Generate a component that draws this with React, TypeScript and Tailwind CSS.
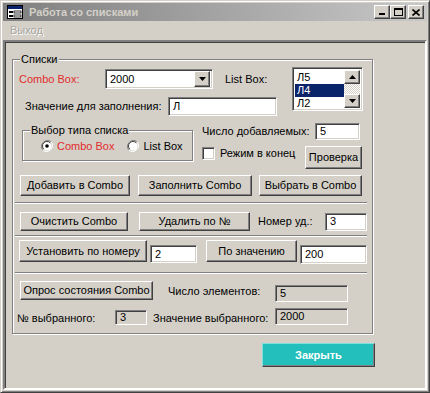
import React from "react";

const raised =
  "bg-[#d4d0c8] border border-t-white border-l-white border-r-[#404040] border-b-[#404040] shadow-[inset_-1px_-1px_0_#808080]";
const sunken =
  "border border-t-[#808080] border-l-[#808080] border-r-white border-b-white shadow-[inset_1px_1px_0_#404040,inset_-1px_-1px_0_#d4d0c8]";

function Btn({ label, className = "" }: { label: string; className?: string }) {
  return (
    <div className={`${raised} flex items-center justify-center shrink-0 whitespace-nowrap ${className}`}>
      {label}
    </div>
  );
}

function Field({ value, className = "", readOnly = false }: { value: string; className?: string; readOnly?: boolean }) {
  return (
    <div
      className={`${sunken} ${readOnly ? "bg-[#d4d0c8]" : "bg-white"} flex items-center pl-[4px] shrink-0 leading-none ${className}`}
    >
      {value}
    </div>
  );
}

function Sep() {
  return <div className="h-0 border-t border-t-[#808080] border-b border-b-white ml-[-4px] w-[352px]" />;
}

function Radio({ checked }: { checked?: boolean }) {
  return (
    <svg width="12" height="12" viewBox="0 0 12 12" className="shrink-0">
      <path d="M10.2 1.8 A6 6 0 0 0 1.8 10.2" fill="none" stroke="#808080" strokeWidth="1" />
      <path d="M1.8 10.2 A6 6 0 0 0 10.2 1.8" fill="none" stroke="#ffffff" strokeWidth="1" />
      <circle cx="6" cy="6" r="4.5" fill="#fff" />
      <path d="M9.2 2.8 A4.5 4.5 0 0 0 2.8 9.2" fill="none" stroke="#404040" strokeWidth="1" />
      {checked && <circle cx="6" cy="6" r="1.8" fill="#000" />}
    </svg>
  );
}

function Arrow({ up }: { up?: boolean }) {
  return (
    <svg width="7" height="4" viewBox="0 0 7 4">
      <polygon points={up ? "3.5,0 7,4 0,4" : "0,0 7,0 3.5,4"} fill="#000" />
    </svg>
  );
}

function TitleIcon() {
  return (
    <svg width="16" height="14" viewBox="0 0 16 14">
      <rect x="0.5" y="0.5" width="15" height="13" fill="#fff" stroke="#000" />
      <rect x="1" y="1" width="14" height="3" fill="#0a246a" />
      <rect x="2" y="6" width="4" height="2" fill="#000" />
      <rect x="7" y="6" width="7" height="2" fill="none" stroke="#000" strokeWidth="0.8" />
      <rect x="2" y="10" width="4" height="2" fill="#000" />
      <rect x="7" y="10" width="7" height="2" fill="none" stroke="#000" strokeWidth="0.8" />
    </svg>
  );
}

export default function App() {
  return (
    <div className="w-[430px] h-[393px] bg-[#d4d0c8] text-[11px] text-black overflow-hidden whitespace-nowrap font-['Liberation_Sans',Arial,sans-serif]">
      <div className="h-full flex flex-col border border-t-[#d4d0c8] border-l-[#d4d0c8] border-r-[#404040] border-b-[#404040] shadow-[inset_1px_1px_0_#fff,inset_-1px_-1px_0_#808080] p-[2px]">
        {/* Title bar */}
        <div className="h-[18px] shrink-0 flex items-center bg-gradient-to-r from-[#808080] to-[#c8c8c8] pl-[4px] pr-[3px]">
          <TitleIcon />
          <span className="ml-[6px] text-[#d4d0c8] font-bold text-[11px]">Работа со списками</span>
          <div className="ml-auto flex items-center">
            <div className={`${raised} w-[16px] h-[14px] flex items-end justify-center pb-[3px]`}>
              <div className="w-[6px] h-[2px] bg-black" />
            </div>
            <div className={`${raised} w-[16px] h-[14px] flex items-center justify-center`}>
              <div className="w-[9px] h-[8px] border border-black border-t-2" />
            </div>
            <div className={`${raised} w-[16px] h-[14px] ml-[2px] flex items-center justify-center`}>
              <svg width="8" height="7" viewBox="0 0 8 7">
                <path d="M0.5 0.5 L7.5 6.5 M7.5 0.5 L0.5 6.5" stroke="#000" strokeWidth="1.6" />
              </svg>
            </div>
          </div>
        </div>

        {/* Menu */}
        <div className="h-[18px] shrink-0 flex items-center pl-[7px]">
          <span className="text-[#a8a6a0] [text-shadow:1px_1px_0_#fff]">Выход</span>
        </div>

        {/* Client area */}
        <div className="flex-1 mt-[1px] border-2 border-t-[#808080] border-l-[#808080] border-r-white border-b-white shadow-[inset_1px_1px_0_#404040]">
          {/* Groupbox Списки */}
          <div className="relative ml-[7px] mt-[17px] w-[361px] h-[275px] border border-[#808080] shadow-[inset_1px_1px_0_#fff,1px_1px_0_#fff] pl-[6px] pt-[7px]">
            <span className="absolute -top-[8px] left-[7px] px-[1px] bg-[#d4d0c8] leading-[14px]">Списки</span>

            {/* Top area */}
            <div className="flex items-start">
              <div className="w-[273px] shrink-0">
                <div className="mt-[2px] h-[20px] flex items-center">
                  <span className="w-[86px] shrink-0 text-[#e22b2b]">Combo Box:</span>
                  <div className={`${sunken} bg-white w-[108px] h-[20px] flex items-center justify-between pl-[4px] pr-[2px]`}>
                    <span>2000</span>
                    <div className={`${raised} w-[16px] h-[16px] flex items-center justify-center`}>
                      <Arrow />
                    </div>
                  </div>
                  <span className="ml-[12px]">List Box:</span>
                </div>
                <div className="mt-[8px] h-[19px] flex items-center">
                  <span className="ml-[6px] w-[143px] shrink-0">Значение для заполнения:</span>
                  <Field value="Л" className="w-[109px] h-[19px]" />
                </div>
              </div>
              <div className={`${sunken} bg-white w-[71px] h-[44px] flex p-[2px]`}>
                <div className="flex-1 flex flex-col leading-[13px] pt-[1px]">
                  <span className="pl-[2px] h-[13px]">Л5</span>
                  <span className="pl-[2px] h-[13px] bg-[#0a246a] text-white">Л4</span>
                  <span className="pl-[2px] h-[13px]">Л2</span>
                </div>
                <div className="w-[16px] flex flex-col bg-[#ecebe7]">
                  <div className={`${raised} h-[14px] flex items-center justify-center`}>
                    <Arrow up />
                  </div>
                  <div className="flex-1 bg-[repeating-conic-gradient(#fff_0_25%,#d4d0c8_0_50%)] bg-[length:2px_2px]" />
                  <div className={`${raised} h-[14px] flex items-center justify-center`}>
                    <Arrow />
                  </div>
                </div>
              </div>
            </div>

            {/* Middle area */}
            <div className="mt-[7px] flex items-start">
              <div className="relative ml-[3px] mt-[7px] w-[171px] h-[31px] border border-[#808080] shadow-[inset_1px_1px_0_#fff,1px_1px_0_#fff] flex items-center pt-[1px]">
                <span className="absolute -top-[8px] left-[7px] px-[1px] bg-[#d4d0c8] leading-[14px]">Выбор типа списка</span>
                <div className="ml-[18px] flex items-center">
                  <Radio checked />
                  <span className="ml-[4px] text-[#e22b2b]">Combo Box</span>
                </div>
                <div className="ml-[13px] flex items-center">
                  <Radio />
                  <span className="ml-[4px]">List Box</span>
                </div>
              </div>
              <div className="ml-[9px] flex flex-col">
                <div className="h-[17px] flex items-center">
                  <span className="w-[113px] shrink-0">Число добавляемых:</span>
                  <Field value="5" className="w-[45px] h-[17px]" />
                </div>
                <div className="mt-[6px] flex items-start">
                  <div className={`${sunken} bg-white w-[13px] h-[13px] mt-[1px] shrink-0`} />
                  <span className="ml-[5px] w-[85px] shrink-0 leading-[14px]">Режим в конец</span>
                  <Btn label="Проверка" className="w-[57px] h-[23px]" />
                </div>
              </div>
            </div>

            {/* Buttons row */}
            <div className="mt-[6px] flex">
              <Btn label="Добавить в Combo" className="ml-[1px] w-[110px] h-[21px]" />
              <Btn label="Заполнить Combo" className="ml-[8px] w-[114px] h-[21px]" />
              <Btn label="Выбрать в Combo" className="ml-[7px] w-[103px] h-[21px]" />
            </div>

            <div className="mt-[6px]">
              <Sep />
            </div>

            <div className="mt-[8px] flex items-center">
              <Btn label="Очистить Combo" className="ml-[1px] w-[108px] h-[19px]" />
              <Btn label="Удалить по №" className="ml-[11px] w-[111px] h-[19px]" />
              <span className="ml-[8px] w-[67px] shrink-0">Номер уд.:</span>
              <Field value="3" className="w-[42px] h-[18px]" />
            </div>

            <div className="mt-[4px]">
              <Sep />
            </div>

            <div className="mt-[3px] flex items-start">
              <Btn label="Установить по номеру" className="w-[128px] h-[22px]" />
              <Field value="2" className="ml-[3px] mt-[5px] w-[47px] h-[18px]" />
              <Btn label="По значению" className="ml-[9px] w-[91px] h-[22px]" />
              <Field value="200" className="ml-[3px] mt-[5px] w-[67px] h-[19px]" />
            </div>

            <div className="mt-[8px]">
              <Sep />
            </div>

            <div className="mt-[7px] flex items-start">
              <Btn label="Опрос состояния Combo" className="ml-[1px] w-[133px] h-[19px]" />
              <span className="ml-[15px] w-[107px] shrink-0 mt-[2px]">Число элементов:</span>
              <Field value="5" readOnly className="mt-[4px] w-[73px] h-[17px]" />
            </div>

            <div className="mt-[6px] flex items-start">
              <span className="ml-[-2px] w-[98px] shrink-0 mt-[2px]">№ выбранного:</span>
              <Field value="3" readOnly className="mt-[2px] w-[32px] h-[15px]" />
              <span className="ml-[6px] w-[122px] shrink-0 mt-[2px]">Значение выбранного:</span>
              <Field value="2000" readOnly className="w-[73px] h-[17px]" />
            </div>
          </div>

          {/* Close */}
          <div className="ml-[257px] mt-[9px] w-[113px] h-[24px] bg-[#22bfbc] border border-t-[#7fe0de] border-l-[#7fe0de] border-r-[#404040] border-b-[#404040] shadow-[inset_-1px_-1px_0_#808080] flex items-center justify-center text-white font-bold">
            Закрыть
          </div>
        </div>
      </div>
    </div>
  );
}
